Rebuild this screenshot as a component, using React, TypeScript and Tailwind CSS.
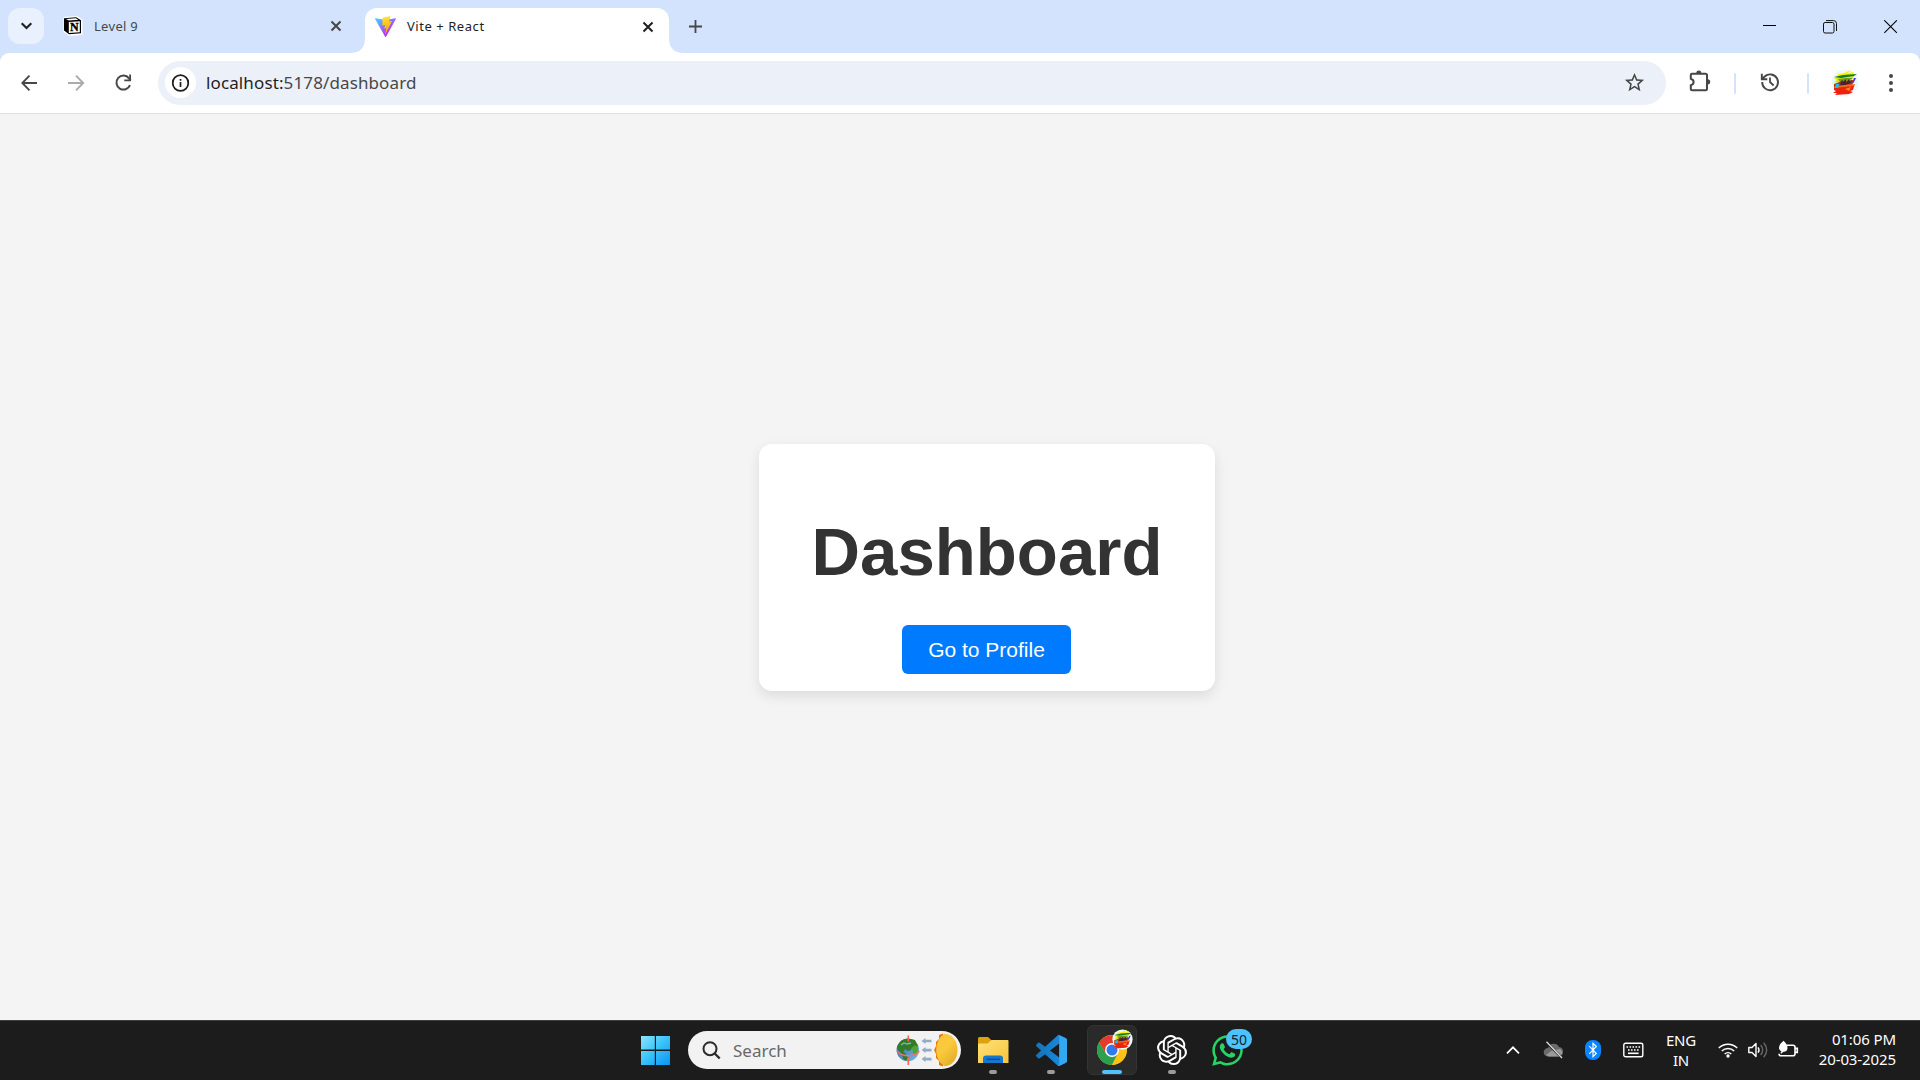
import React from 'react';
import { SiOpenai } from 'react-icons/si';
import { FaWhatsapp } from 'react-icons/fa';

const uiFont = "font-['Noto_Sans',sans-serif]";

function NotionIcon() {
  return (
    <svg className="ml-[19px] h-[20px] w-[20px] shrink-0" viewBox="0 0 20 20">
      <path d="M.5 1 14 0l5.5 3.5V19l-13 1L.5 16Z" fill="#fff" />
      <path d="M1 2.2 13.2 1.3l4.8 3V17.3l-12 1L1 14.5Z" fill="#000" />
      <path d="m3 2.9 9.8-.7 2.5 1.6-9.5.6Z" fill="#fff" />
      <path d="M5.8 5.9 16.8 5.2v11l-11 .8Z" fill="#fff" />
      <text x="11.3" y="15.2" textAnchor="middle" fontFamily="Liberation Serif" fontWeight="700" fontSize="12" fill="#000" stroke="#000" strokeWidth=".35">N</text>
    </svg>
  );
}

function ViteIcon() {
  return (
    <svg className="ml-[10px] h-[21px] w-[21px] shrink-0" viewBox="0 0 256 257">
      <defs>
        <linearGradient id="va" x1="-.8%" x2="57.6%" y1="7.7%" y2="78.4%">
          <stop offset="0%" stopColor="#41D1FF" />
          <stop offset="100%" stopColor="#BD34FE" />
        </linearGradient>
        <linearGradient id="vb" x1="43.4%" x2="50.3%" y1="2.2%" y2="89%">
          <stop offset="0%" stopColor="#FFEA83" />
          <stop offset="8.3%" stopColor="#FFDD35" />
          <stop offset="100%" stopColor="#FFA800" />
        </linearGradient>
      </defs>
      <path fill="url(#va)" d="M255.153 37.938 134.897 252.976c-2.483 4.44-8.862 4.466-11.382.048L.875 37.958c-2.746-4.814 1.371-10.646 6.827-9.67l120.385 21.517a6.537 6.537 0 0 0 2.322-.004l117.867-21.483c5.438-.991 9.574 4.796 6.877 9.62Z" />
      <path fill="url(#vb)" d="M185.432.063 96.44 17.501a3.268 3.268 0 0 0-2.634 3.014l-5.474 92.456a3.268 3.268 0 0 0 3.997 3.378l24.777-5.718c2.318-.535 4.413 1.507 3.936 3.838l-7.361 36.047c-.495 2.426 1.782 4.5 4.151 3.78l15.304-4.649c2.372-.72 4.652 1.36 4.15 3.788l-11.698 56.621c-.732 3.542 3.979 5.473 5.943 2.437l1.313-2.028 72.516-144.72c1.215-2.423-.88-5.186-3.54-4.672l-25.505 4.922c-2.396.462-4.435-1.77-3.759-4.114l16.646-57.705c.677-2.35-1.37-4.583-3.769-4.113Z" />
    </svg>
  );
}

function TabClose({ color, className }: { color: string; className: string }) {
  return (
    <svg className={'h-[12px] w-[12px] shrink-0 ' + className} viewBox="0 0 12 12">
      <path d="m1.5 1.5 9 9m0-9-9 9" stroke={color} strokeWidth="2" />
    </svg>
  );
}

function Avatar({ className }: { className: string }) {
  return (
    <svg className={className} viewBox="0 0 28 28">
      <circle cx="14" cy="14" r="13.5" fill="#eaf9fb" />
      <path d="M7 5l6-1 7-3-3 3 6-1-2 3-15 2Z" fill="#fff200" />
      <path d="M3 9l8-3 13-1-2 4-12 5-7-1 3-2Z" fill="#d9e516" />
      <path d="m3 8 9-2 14-1-3 2-13 2Z" fill="#127d28" />
      <path d="m7 10 8-1 7 0-3 2-10 2Z" fill="#6f9c1a" />
      <path d="m3 15 8-3 11-1 1 2-3 4-12 2-5 1Z" fill="#b9361a" />
      <path d="m10 12 2-1-1 3 4-4v4l3-4 1 3 2-3-1 4-6 2-5 1Z" fill="#3a2735" />
      <path d="M23 9h2l-2 4-2 1Z" fill="#3a35d8" />
      <path d="M4 17l20-2-1 3-15 2-5-1Z" fill="#f36b19" />
      <path d="m3 19 20-2-1 4-3 1 3 1-4 2-14 1 2-2H2l3-2-2-1Z" fill="#ed210d" />
      <path d="M5 15h3l-1 4H4Z" fill="#12c7f3" />
      <path d="m14 20 6-2-2 4Z" fill="#ff841f" />
    </svg>
  );
}

function TabStrip() {
  return (
    <div className="flex h-[53px] items-start bg-[#d3e3fd]">
      <div className="ml-[8px] mt-[8px] flex h-[36px] w-[36px] shrink-0 items-center justify-center rounded-[12px] bg-[#e9f1fe]">
        <svg className="h-[8px] w-[12px] translate-x-[0.5px]" viewBox="0 0 12 8">
          <path d="m1.2 1.3 4.8 4.8 4.8-4.8" fill="none" stroke="#1f1f1f" strokeWidth="2.1" />
        </svg>
      </div>
      <div className="flex h-[52px] w-[306px] shrink-0 items-center">
        <NotionIcon />
        <span className="ml-[11px] mt-[2px] w-[237px] text-[13px] tracking-[0.3px] text-[#474747]">Level 9</span>
        <TabClose color="#474747" className="-ml-[1px]" />
      </div>
      <svg className="mt-[38px] h-[15px] w-[15px] shrink-0" viewBox="0 0 15 15">
        <path d="M15 0v15H0Q15 15 15 0Z" fill="#fff" />
      </svg>
      <div className="mt-[8px] flex h-[45px] w-[304px] shrink-0 items-start rounded-t-[12px] bg-white">
        <div className="flex h-[37px] items-center">
          <ViteIcon />
          <span className="ml-[11px] w-[236px] text-[13px] tracking-[0.55px] text-[#1f1f1f]">Vite + React</span>
          <TabClose color="#1f1f1f" className="-ml-[1px]" />
        </div>
      </div>
      <svg className="mt-[38px] h-[15px] w-[15px] shrink-0" viewBox="0 0 15 15">
        <path d="M0 0v15h15Q0 15 0 0Z" fill="#fff" />
      </svg>
      <svg className="ml-[5px] mt-[20px] h-[13px] w-[13px] shrink-0" viewBox="0 0 13 13">
        <path d="M6.5 0v13M0 6.5h13" stroke="#474747" strokeWidth="1.8" />
      </svg>
      <div className="ml-auto mr-[23px] mt-[20px] flex">
        <svg className="h-[14px] w-[13px]" viewBox="0 0 13 14"><path d="M0 5.5h13" stroke="#000" /></svg>
        <svg className="ml-[47px] h-[14px] w-[14px]" viewBox="0 0 14 14">
          <rect x=".5" y="2.5" width="10.5" height="10.5" rx="1.6" fill="none" stroke="#111" />
          <path d="M3 .6h7.5a3 3 0 0 1 3 3V11" fill="none" stroke="#111" />
        </svg>
        <svg className="ml-[47px] h-[14px] w-[13px]" viewBox="0 0 13 14"><path d="m.3.3 12.6 12.6M12.9.3.3 12.9" stroke="#000" strokeWidth="1.1" /></svg>
      </div>
    </div>
  );
}

function Toolbar() {
  return (
    <div className="h-[61px] bg-[#d3e3fd]">
      <div className="flex h-[61px] items-center rounded-t-[9px] border-b border-[#dfe1e3] bg-white">
        <svg className="ml-[21px] h-[18px] w-[17px] shrink-0" viewBox="0 0 17 18">
          <path d="M16 9H1.5M8.5 1.7 1.3 9l7.2 7.3" fill="none" stroke="#474747" strokeWidth="1.9" />
        </svg>
        <svg className="ml-[30px] h-[18px] w-[17px] shrink-0" viewBox="0 0 17 18">
          <path d="M0 9h15M8 1.7 15.2 9 8 16.3" fill="none" stroke="#ababab" strokeWidth="1.9" />
        </svg>
        <svg className="ml-[30px] h-[18px] w-[18px] shrink-0" viewBox="0 0 18 18">
          <path d="M15 11.1A7 7 0 1 1 14 4.3L15.7 6.3" fill="none" stroke="#474747" strokeWidth="2" />
          <path d="M16 .5v6.8H9.3V5.4h4.9V.5Z" fill="#474747" />
        </svg>
        <div className="mb-px ml-[25px] flex h-[44px] w-[1508px] shrink-0 items-center rounded-full bg-[#ecf0f9]">
          <div className="ml-[7px] flex h-[31px] w-[31px] items-center justify-center rounded-full bg-white">
            <svg className="h-[18px] w-[18px] -translate-x-[0.5px]" viewBox="0 0 18 18">
              <circle cx="9" cy="9" r="7.8" fill="none" stroke="#1f1f1f" strokeWidth="1.8" />
              <path d="M9 8v5M9 4.9v1.8" stroke="#1f1f1f" strokeWidth="1.7" />
            </svg>
          </div>
          <span className="ml-[10px] text-[17px] leading-[24px] tracking-[0.12px] text-[#474747]">
            <span className="text-[#1f1f1f]">localhost:</span>5178/dashboard
          </span>
          <svg className="ml-auto mr-[20px] h-[23px] w-[23px]" viewBox="0 0 24 24">
            <path fill="#474747" d="m22 9.24-7.19-.62L12 2 9.19 8.63 2 9.24l5.46 4.73L5.82 21 12 17.27 18.18 21l-1.63-7.03L22 9.24zM12 15.4l-3.76 2.27 1-4.28-3.32-2.88 4.38-.38L12 6.1l1.71 4.04 4.38.38-3.32 2.88 1 4.28L12 15.4z" />
          </svg>
        </div>
        <svg className="-mt-[4px] ml-[23px] h-[22px] w-[22px] shrink-0" viewBox="0 0 22 22">
          <path d="M3 3.7H16.500q1.500 0 1.500 1.500V19q0 1.200-1.200 1.200H3q-1.200 0-1.200-1.200v-3.700q2.800-.8 2.800-3.300T1.800 8.700V4.900Q1.800 3.700 3 3.700Z" fill="none" stroke="#474747" strokeWidth="2" />
          <path d="M7.300 3.200a2.500 2.600 0 0 1 5 0ZM18.700 9.200a2.500 2.600 0 0 1 0 5.200Z" fill="#474747" />
        </svg>
        <div className="ml-[23px] h-[21px] w-[2px] shrink-0 rounded-full bg-[#d3e3fd]" />
        <svg className="-mt-[3px] ml-[24px] h-[20px] w-[20px] shrink-0" viewBox="0 0 20 20">
          <path d="M2.2 10A7.9 7.9 0 1 0 4.7 4.5L2 7M1.8 1.8v5.5h5.5" fill="none" stroke="#474747" strokeWidth="1.9" />
          <path d="M10 5.5V10l3.6 3.5" fill="none" stroke="#474747" strokeWidth="1.8" />
        </svg>
        <div className="ml-[27px] h-[21px] w-[2px] shrink-0 rounded-full bg-[#d3e3fd]" />
        <Avatar className="ml-[22px] h-[28px] w-[28px] shrink-0" />
        <svg className="ml-[30px] h-[18px] w-[4px] shrink-0" viewBox="0 0 4 18">
          <circle cx="2" cy="2" r="2" fill="#474747" /><circle cx="2" cy="9" r="2" fill="#474747" /><circle cx="2" cy="16" r="2" fill="#474747" />
        </svg>
      </div>
    </div>
  );
}

function DashboardPage() {
  return (
    <main className="flex h-[906px] items-start bg-[#f4f4f4] font-['Liberation_Sans',Arial,sans-serif]">
      <section className="ml-[759px] mt-[330px] flex h-[247px] w-[456px] flex-col items-center rounded-[13px] bg-white shadow-[0_5px_13px_rgba(0,0,0,0.1)]">
        <h1 className="mt-[70px] text-[67.2px] font-bold leading-[76px] text-[#333]">Dashboard</h1>
        <button className="mr-px mt-[35px] h-[49px] w-[169px] rounded-[6px] bg-[#007bff] text-[21px] leading-[49px] text-white">Go to Profile</button>
      </section>
    </main>
  );
}

function WindowsLogo() {
  return (
    <svg className="h-[30px] w-[29px] shrink-0" viewBox="0 0 29 30">
      <defs>
        <linearGradient id="wl" x1="0" y1="0" x2="29" y2="30" gradientUnits="userSpaceOnUse">
          <stop stopColor="#8fe5ff" /><stop offset=".5" stopColor="#38c3fa" /><stop offset="1" stopColor="#0a94f2" />
        </linearGradient>
      </defs>
      <path d="M0 1h13.8v13.5H0ZM15 1h14v13.500H15ZM0 16h13.800v14H0ZM15 16h14v14H15Z" fill="url(#wl)" />
    </svg>
  );
}

function SearchArt() {
  return (
    <svg className="ml-auto mr-[2px] h-[34px] w-[63px]" viewBox="0 0 63 34">
      <defs>
        <linearGradient id="sea" x1="0" y1="0" x2="1" y2="1"><stop stopColor="#315a91" /><stop offset="1" stopColor="#78bef5" /></linearGradient>
        <linearGradient id="sun" x1="0" y1="0" x2=".7" y2="1"><stop stopColor="#f9c63a" /><stop offset=".5" stopColor="#fbc93c" /><stop offset="1" stopColor="#e2ae2a" /></linearGradient>
      </defs>
      <circle cx="11.8" cy="17" r="11.2" fill="url(#sea)" />
      <path d="M4 9q5-5 11-3l4 1 3 6-4 2-2-1-1 3-3 1-3-2-2 3 2 1 3 4-2 4-3-2-1-5-3-3-2-4Z" fill="#317c24" />
      <path d="m16 15 3-3 3 3-1 5-3 3-1-4Z" fill="#4ea52c" />
      <path d="m5 12 3-2 3 1 4-1" fill="none" stroke="#86b2c8" strokeWidth="1.3" />
      <path d="M12.3 2.5v6M12.3 25v7" stroke="#f4694e" strokeWidth="1.6" />
      <path d="M.8 18q5 5 12 4.800T23.400 18" fill="none" stroke="#f17661" strokeWidth="1.500" />
      <path d="M25.500 8l4-3v1.700h6v2.600h-6V11ZM25.500 17.100l4-3v1.700h6v2.600h-6v1.700ZM25.500 26.100l4-3v1.700h6v2.600h-6v1.700Z" fill="#94acc3" />
      <path d="M47 .5 43 2v4l-3 3v4l-2 4 2 4v4l3 3v4l4 1.5Z" fill="#ee750b" />
      <path d="M48.5.8C57 1 61.5 9 61.5 17S57 33 48.5 33.2Q40.2 28 40.2 17T48.5.8Z" fill="url(#sun)" />
    </svg>
  );
}

function FolderIcon() {
  return (
    <svg className="h-[30px] w-[32px]" viewBox="0 0 32 30">
      <defs><linearGradient id="fo" x1="0" y1="0" x2="1" y2="1"><stop stopColor="#ffe17a" /><stop offset="1" stopColor="#f8c43c" /></linearGradient></defs>
      <path d="M1 3.500Q1 2 2.500 2H11l3.500 3.300V12H1Z" fill="#dfa00c" />
      <path d="M1 9.500q0-1 1-1h8.500l4-3.500h16q1 0 1 1V28H1Z" fill="url(#fo)" />
      <path d="M6 28v-4.500q0-3 3-3h14q3 0 3 3V28Z" fill="#1777cf" />
      <path d="M9.500 24.300H23" stroke="#0a4f9b" strokeWidth="1.400" />
    </svg>
  );
}

function CodeIcon() {
  return (
    <svg className="h-[31px] w-[31px]" viewBox="0 0 24 24">
      <defs><linearGradient id="cd" x1="0" x2="1"><stop stopColor="#1273bd" /><stop offset="1" stopColor="#1c8fdc" /></linearGradient></defs>
      <path fill="url(#cd)" d="M23.15 2.587L18.21.21a1.494 1.494 0 0 0-1.705.29l-9.46 8.63-4.12-3.128a.999.999 0 0 0-1.276.057L.327 7.261A1 1 0 0 0 .326 8.74L3.899 12 .326 15.26a1 1 0 0 0 .001 1.479L1.65 17.94a.999.999 0 0 0 1.276.057l4.12-3.128 9.46 8.63a1.492 1.492 0 0 0 1.704.29l4.942-2.377A1.5 1.5 0 0 0 24 20.06V3.939a1.5 1.5 0 0 0-.85-1.352zm-5.146 14.861L10.826 12l7.178-5.448v10.896z" />
      <path fill="#32a8f2" d="M18.2.2 23.15 2.6A1.5 1.5 0 0 1 24 3.94v16.12a1.5 1.5 0 0 1-.85 1.35L18.2 23.8q-.9.3-1.6-.3 1.4.4 1.4-1.2V1.7Q18 .1 16.6.5q.7-.6 1.6-.3Z" />
    </svg>
  );
}

function ChromeIcon() {
  return (
    <svg className="h-[30px] w-[30px]" viewBox="0 0 48 48">
      <circle cx="24" cy="24" r="24" fill="#fbc116" />
      <path d="M24 13h20.8A24 24 0 0 0 3.2 12L14.5 29.5Z" fill="#e33b2e" />
      <path d="M3.2 12A24 24 0 0 0 24 48l9.5-18.5-19 0Z" fill="#2da04e" />
      <path d="M24 48a24 24 0 0 0 20.8-35H24l9.5 16.5Z" fill="#fbc116" />
      <circle cx="24" cy="24" r="11.2" fill="#fff" />
      <circle cx="24" cy="24" r="8.8" fill="#2f7bed" />
    </svg>
  );
}

function TaskItem({ children, dot, className }: { children: React.ReactNode; dot?: boolean; className: string }) {
  return (
    <div className={'relative flex h-[50px] w-[50px] shrink-0 items-center justify-center ' + className}>
      {children}
      {dot && <span className="absolute bottom-[1px] left-[21px] h-[4px] w-[8px] rounded-full bg-[#9b9b9b]" />}
    </div>
  );
}

function Tray() {
  return (
    <div className="ml-auto mr-[24px] flex h-[58px] items-center">
      <svg className="h-[10px] w-[14px]" viewBox="0 0 14 10"><path d="m1 8.3 6-6 6 6" fill="none" stroke="#fff" strokeWidth="1.7" /></svg>
      <svg className="ml-[23px] h-[18px] w-[21px]" viewBox="0 0 21 18">
        <path d="M5 15.5a4.3 4.3 0 0 1 0-8.6A6 6 0 0 1 16 6a4.8 4.8 0 0 1 0 9.5Z" fill="#6b6b6b" />
        <path d="m3 14 6-4.5 8-1.5a4 4 0 0 1-1 7.5H6Z" fill="#999" />
        <path d="m3 1 15.5 15.5" stroke="#1c1c1c" strokeWidth="2.4" />
        <path d="M3.5.8 19 17" stroke="#ddd" strokeWidth="1.3" />
      </svg>
      <svg className="ml-[21px] h-[20px] w-[16px]" viewBox="0 0 16 20">
        <rect width="16" height="20" rx="7.5" fill="#0a84ff" />
        <path d="m4.3 6.2 7 7.3L8 16.6V3.4l3.3 3.1-7 7.3" fill="none" stroke="#fff" strokeWidth="1.2" />
      </svg>
      <svg className="ml-[22px] h-[16px] w-[21px]" viewBox="0 0 21 16">
        <rect x=".8" y="1.3" width="19" height="13.4" rx="1.8" fill="none" stroke="#fff" strokeWidth="1.4" />
        <path d="M3.5 5h13.6" stroke="#fff" strokeWidth="1.6" strokeDasharray="1.6 1.4" />
        <path d="M5 8h10.6" stroke="#fff" strokeWidth="1.6" strokeDasharray="1.6 1.4" />
        <path d="M5 11.3h10.6" stroke="#fff" strokeWidth="1.6" />
      </svg>
      <div className="mb-px ml-[21px] w-[32px] text-center text-[15px] leading-[20px] tracking-[-0.2px] text-white">ENG<br />IN</div>
      <svg className="ml-[21px] h-[16px] w-[20px]" viewBox="0 0 20 16">
        <path d="M.8 6a13 13 0 0 1 18.4 0M3.8 9a8.8 8.8 0 0 1 12.4 0M6.7 12a4.7 4.7 0 0 1 6.6 0" fill="none" stroke="#fff" strokeWidth="1.5" />
        <circle cx="10" cy="14" r="1.7" fill="#fff" />
      </svg>
      <svg className="ml-[10px] h-[18px] w-[20px]" viewBox="0 0 20 18">
        <path d="M.8 6.5H4l4-4v13l-4-4H.8Z" fill="none" stroke="#fff" strokeWidth="1.4" strokeLinejoin="round" />
        <path d="M10 6.3q2 2.7 0 5.4" fill="none" stroke="#fff" strokeWidth="1.4" />
        <path d="M12.7 4q4 5 0 10M15.7 1.7q6 7.3 0 14.6" fill="none" stroke="#666" strokeWidth="1.4" />
      </svg>
      <svg className="ml-[10px] h-[20px] w-[21px]" viewBox="0 0 21 20">
        <path d="M8.5 5.3H15q2 0 2 2v6.4q0 2-2 2H3q-2 0-2-2M17.3 8.4h2v4h-2" fill="none" stroke="#fff" strokeWidth="1.6" />
        <path d="M5.5.8q4 3.5 4 7.2t-4 3.8l-2.5 2-.5-1.2 1-1Q.3 9.5 1.2 6.5T5.5.8Z" fill="#fff" />
      </svg>
      <div className="mb-[2px] ml-[15px] w-[82px] whitespace-nowrap text-right text-[15px] leading-[20px] tracking-[-0.1px] text-white">
        <div>01:06 PM</div>
        <div>20-03-2025</div>
      </div>
    </div>
  );
}

function Taskbar() {
  return (
    <footer className="flex h-[60px] items-center border-t border-[#3c4040] bg-[#1c1c1c] pb-px">
      <div className="ml-[641px] flex items-center">
        <WindowsLogo />
        <div className="ml-[18px] flex h-[38px] w-[273px] items-center rounded-full bg-[#f2f2f2]">
          <svg className="ml-[14px] h-[19px] w-[19px]" viewBox="0 0 19 19">
            <circle cx="8" cy="7.7" r="6.5" fill="none" stroke="#2b2b2b" strokeWidth="2" />
            <path d="m12.7 12.5 5 5" stroke="#2b2b2b" strokeWidth="2.4" />
          </svg>
          <span className="ml-[12px] mt-px text-[17px] leading-[24px] text-[#686868]">Search</span>
          <SearchArt />
        </div>
        <TaskItem dot className="ml-[7px]"><FolderIcon /></TaskItem>
        <TaskItem dot className="ml-[8px]"><CodeIcon /></TaskItem>
        <TaskItem className="ml-[11px] rounded-[6px] border border-[#343434] bg-[#2a2a2a]">
          <ChromeIcon />
          <Avatar className="absolute left-[24px] top-[3px] h-[21px] w-[21px]" />
          <span className="absolute bottom-0 left-[14px] h-[4px] w-[20px] rounded-full bg-[#4cc2ff]" />
        </TaskItem>
        <TaskItem dot className="ml-[10px]"><SiOpenai className="h-[30px] w-[30px] text-white" /></TaskItem>
        <TaskItem className="ml-[5px]">
          <FaWhatsapp className="h-[35px] w-[35px] text-[#25d366]" />
          <span className="absolute left-[24px] top-[4px] flex h-[20px] w-[26px] items-center justify-center rounded-full bg-[#4cc2ff] text-[14px] text-[#15222b]">50</span>
        </TaskItem>
      </div>
      <Tray />
    </footer>
  );
}

export default function App() {
  return (
    <div className={'h-[1080px] w-[1920px] overflow-hidden ' + uiFont}>
      <TabStrip />
      <Toolbar />
      <DashboardPage />
      <Taskbar />
    </div>
  );
}
